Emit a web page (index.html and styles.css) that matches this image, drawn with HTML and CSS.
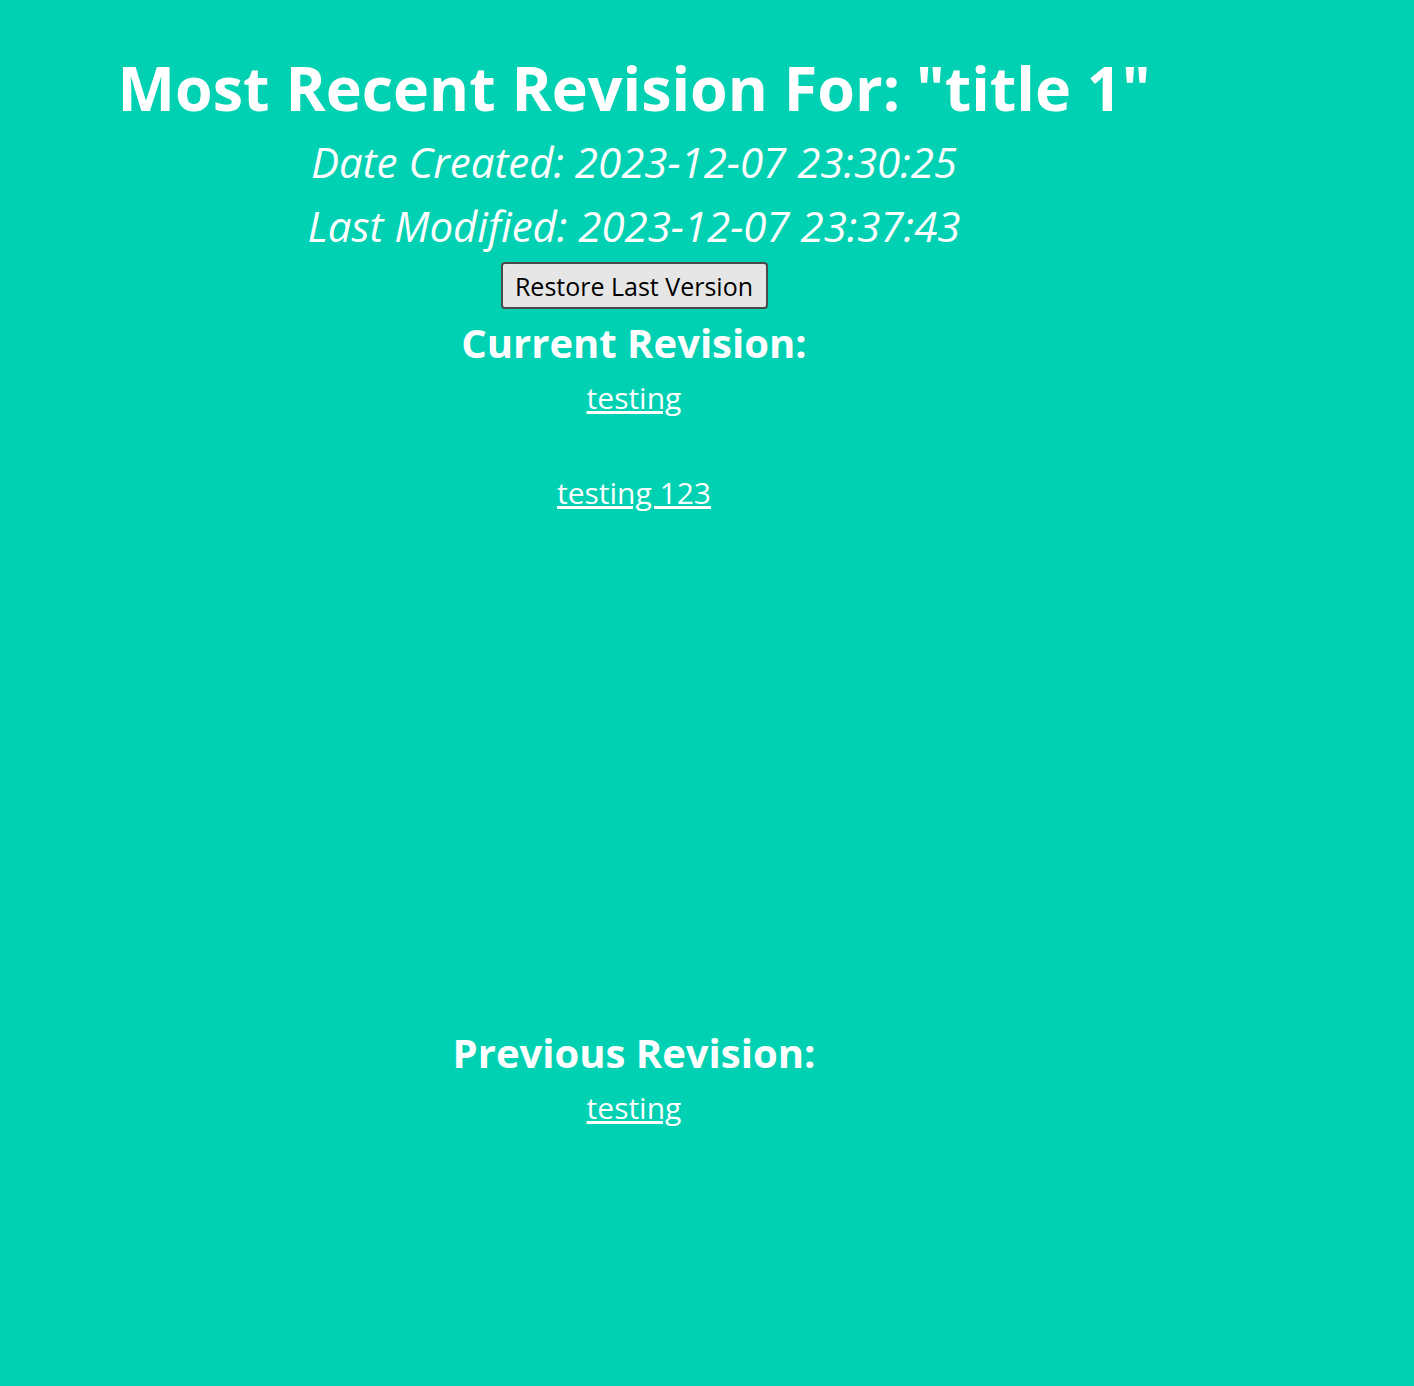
FILE: index.html
```html
<!DOCTYPE html>
<html>
<head>
<meta charset="utf-8">
<link rel="stylesheet" href="styles.css">
</head>
<body>
<main class="page">
  <h1 class="title">Most Recent Revision For: "title 1"</h1>
  <p class="meta">Date Created: 2023-12-07 23:30:25</p>
  <p class="meta">Last Modified: 2023-12-07 23:37:43</p>
  <button class="restore" type="button">Restore Last Version</button>
  <h2 class="section">Current Revision:</h2>
  <div class="content current">
    <p><a href="#">testing</a></p>
    <p><a href="#">testing 123</a></p>
  </div>
  <h2 class="section">Previous Revision:</h2>
  <div class="content">
    <p><a href="#">testing</a></p>
  </div>
</main>
</body>
</html>
```
FILE: styles.css
```css
html, body {
  margin: 0;
  padding: 0;
  background: #00d1b2;
}
body {
  font-family: "Open Sans", "Noto Sans", sans-serif;
  color: #ffffff;
  min-height: 1386px;
}
.page {
  width: 1268px;
  display: flex;
  flex-direction: column;
  align-items: center;
  text-align: center;
  padding-top: 46px;
}
.title {
  margin: 0;
  font-size: 61px;
  font-weight: 700;
  line-height: 84px;
}
.meta {
  margin: 0;
  font-size: 42px;
  font-style: italic;
  line-height: 64px;
}
.restore {
  margin-top: 4px;
  font-family: inherit;
  font-size: 25px;
  color: #000;
  background: #e6e6e6;
  border: 2px solid #4a4a4a;
  border-radius: 4px;
  height: 47px;
  width: 267px;
  padding: 0;
}
.section {
  margin: 6px 0 0;
  font-size: 40px;
  font-weight: 700;
  line-height: 56px;
}
.content p {
  margin: 0;
  font-size: 30px;
  line-height: 48px;
}
.content p:first-child {
  margin-top: 3px;
}
.content p + p {
  margin-top: 47px;
}
.current {
  height: 648px;
}
a {
  color: #ffffff;
  text-decoration: underline;
}
```
